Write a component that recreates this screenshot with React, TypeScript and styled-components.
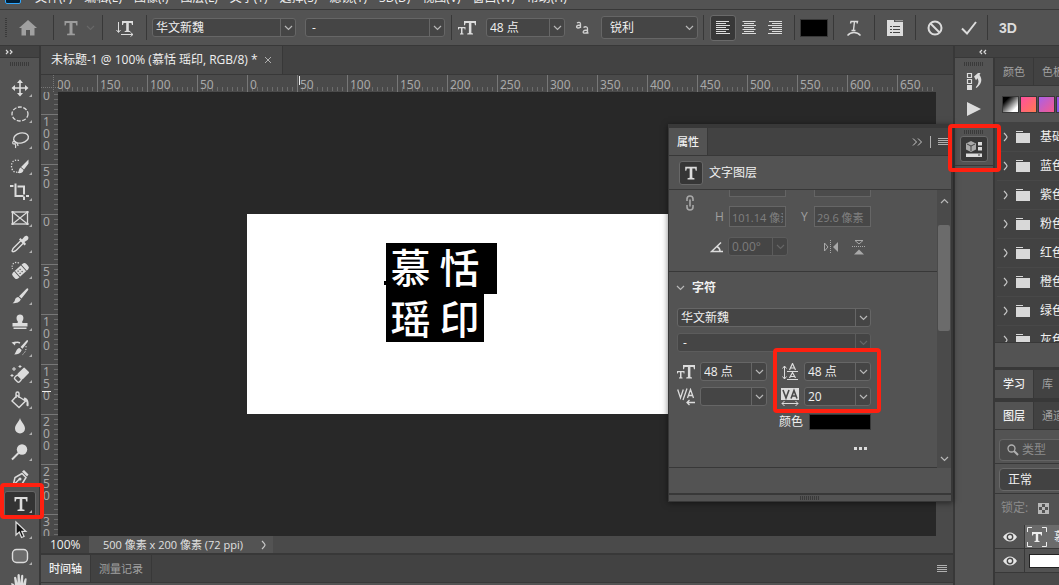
import React from "react";
import styled, { createGlobalStyle } from "styled-components";

const c = {
  panel: "#535353",
  mid: "#4a4a4a",
  dark: "#424242",
  field: "#454545",
  line: "#383838",
  edge: "#666666",
  canvas: "#282828",
  text: "#f0f0f0",
  dim: "#a0a0a0",
  icon: "#dcdcdc",
  red: "#ff2010",
};

const Global = createGlobalStyle`
  * { box-sizing: border-box; }
  body { margin: 0; background: ${c.panel}; color: ${c.text};
    font: 12px/16px "Open Sans", "Noto Sans CJK SC", sans-serif; }
  button, select, input { font: inherit; color: inherit; margin: 0; }
  button { border: 0; background: none; padding: 0; }
  svg { display: block; flex: none; }
`;

/* ---------- shared pieces ---------- */

const Shell = styled.div`
  display: flex;
  flex-direction: column;
  height: 100vh;
  overflow: hidden;
  background: ${c.panel};
`;

const Svg = ({ w = 20, h = w, box, children, color = c.icon }: {
  w?: number; h?: number; box?: string; children: React.ReactNode; color?: string;
}) => (
  <svg width={w} height={h} viewBox={box ?? `0 0 ${w} ${h}`} fill="none" stroke={color} color={color} aria-hidden="true">
    {children}
  </svg>
);

const Chevron = ({ color = "#b8b8b8", up = false }: { color?: string; up?: boolean }) => (
  <Svg w={9} h={6} color={color}><path strokeWidth="1.200" d={up ? "M1 5l3.500-3.500L8 5" : "M1 1l3.500 3.500L8 1"} /></Svg>
);

const ChevronRight = ({ color = "#c8c8c8" }: { color?: string }) => (
  <Svg w={6} h={10} color={color}><path d="M1 1q3 3 3 4t-3 4" strokeWidth="1.2" /></Svg>
);

const MenuLines = () => (
  <Svg w={10} h={8} color="#b0b0b0"><path d="M0 .5h10M0 2.5h10M0 4.5h10M0 6.5h10" /></Svg>
);

const Grip = styled.div<{ $vertical?: boolean }>`
  flex: none;
  width: ${(p) => (p.$vertical ? "2px" : "20px")};
  height: ${(p) => (p.$vertical ? "20px" : "4px")};
  background: repeating-linear-gradient(${(p) => (p.$vertical ? "180deg" : "90deg")}, #3a3a3a 0 1px, transparent 1px 2px);
`;

const Highlight = styled.div<{ $inset: string; $height?: number }>`
  position: absolute;
  inset: ${(p) => p.$inset};
  height: ${(p) => (p.$height ? `${p.$height}px` : "auto")};
  border: 4px solid ${c.red};
  border-radius: 4px;
  z-index: 10;
  pointer-events: none;
`;

const ComboBox = styled.span<{ $width?: number; $tall?: boolean; $off?: boolean }>`
  position: relative;
  display: inline-flex;
  flex: none;
  width: ${(p) => (p.$width ? `${p.$width}px` : "100%")};
  height: ${(p) => (p.$tall ? 23 : 19)}px;
  border: 1px solid ${(p) => (p.$off ? "#5c5c5c" : c.edge)};
  border-radius: 3px;
  background: ${c.field};
`;

const ComboSelect = styled.select<{ $pad: number; $dim?: boolean }>`
  appearance: none;
  width: 100%;
  border: 0;
  background: transparent;
  padding: 0 16px 0 ${(p) => p.$pad}px;
  line-height: 16px;
  outline: none;
  color: ${(p) => (p.$dim ? "#7c7c7c" : c.text)};
  option { color: #111; }
`;

const ComboArrow = styled.span<{ $plain?: boolean; $off?: boolean }>`
  position: absolute;
  inset: 0 0 0 auto;
  width: 15px;
  display: flex;
  align-items: center;
  justify-content: center;
  pointer-events: none;
  border-left: ${(p) => (p.$plain ? "0" : `1px solid ${p.$off ? "#5c5c5c" : c.edge}`)};
`;

const Combo = ({ label, value, width, tall, plain, off, dim, pad = 3 }: {
  label: string; value: string; width?: number; tall?: boolean; plain?: boolean; off?: boolean; dim?: boolean; pad?: number;
}) => (
  <ComboBox $width={width} $tall={tall} $off={off}>
    <ComboSelect aria-label={label} $pad={pad} $dim={dim}><option>{value}</option></ComboSelect>
    <ComboArrow $plain={plain} $off={off}><Chevron color={off ? "#666" : undefined} /></ComboArrow>
  </ComboBox>
);

const Tabs = styled.div<{ $height: number }>`
  display: flex;
  flex: none;
  height: ${(p) => p.$height}px;
  overflow: hidden;
  background: ${c.dark};
  border-bottom: 1px solid ${c.line};
`;

const Tab = styled.button<{ $on?: boolean; $pad?: number }>`
  flex: none;
  display: flex;
  align-items: center;
  gap: 6px;
  padding: 0 ${(p) => p.$pad ?? 8}px;
  white-space: nowrap;
  border-right: 1px solid ${c.line};
  background: ${(p) => (p.$on ? c.panel : "transparent")};
  color: ${(p) => (p.$on ? c.text : c.dim)};
  font-size: 11px;
  font-weight: ${(p) => (p.$on ? 500 : 400)};
`;

const SerifT = ({ size = 18, color = c.icon }: { size?: number; color?: string }) => (
  <Svg w={size} box="0 0 18 18" color={color}>
    <path stroke="none" fill="currentColor" d="M2.5 2h13v4.500h-1.200L13.700 4h-3.200v10.400l2.400.4v1.400H5.100v-1.400l2.400-.4V4H4.300l-.6 2.500H2.500z" />
  </Svg>
);

const SizeIcon = () => (
  <Svg w={18}>
    <g stroke="none" fill="currentColor">
      <path d="M6 2h12v4.200h-1L16.400 4h-3v10l1.600.4v1.100H9.200v-1.100l1.700-.4V4H7.600L7 6.200H6z" />
      <path d="M0 8h7.500v2.600h-.8L6.400 9.200H4.500v5.100l1 .2v1H2v-1l1-.2V9.200H1.200L.8 10.600H0z" />
    </g>
  </Svg>
);

/* ---------- menu and options bars ---------- */

const MenuBar = styled.nav`
  display: flex;
  align-items: flex-end;
  flex: none;
  gap: 12px;
  height: 10px;
  padding-left: 5px;
  overflow: hidden;
  border-bottom: 1px solid ${c.line};
`;

const Logo = styled.div`
  width: 16px;
  height: 14px;
  margin: 0 2px 5px 0;
  border: 1px solid #31a8ff;
  border-radius: 2px;
  background: #001e36;
`;

const MenuItem = styled.a`
  color: inherit;
  text-decoration: none;
  line-height: 16px;
  padding-bottom: 3px;
`;

const OptionsBar = styled.div`
  display: flex;
  align-items: center;
  flex: none;
  height: 36px;
  padding-left: 5px;
  border-bottom: 1px solid ${c.line};
`;

const Group = styled.div<{ $width?: number; $pad?: number; $gap?: number; $center?: boolean }>`
  display: flex;
  flex: none;
  align-items: center;
  justify-content: ${(p) => (p.$center ? "center" : "flex-start")};
  width: ${(p) => (p.$width ? `${p.$width}px` : "auto")};
  padding: 0 ${(p) => p.$pad ?? 0}px;
  gap: ${(p) => p.$gap ?? 0}px;
`;

const Sep = styled.i`
  flex: none;
  width: 1px;
  height: 25px;
  background: ${c.line};
`;

const IconButton = styled.button<{ $on?: boolean; $width?: number }>`
  display: flex;
  align-items: center;
  justify-content: center;
  flex: none;
  width: ${(p) => p.$width ?? 26}px;
  height: 26px;
  border-radius: 3px;
  border: 1px solid ${(p) => (p.$on ? "#6a6a6a" : "transparent")};
  background: ${(p) => (p.$on ? "#383838" : "transparent")};
`;

const Swatch = styled.button<{ $width: number; $height: number; $fill: string }>`
  flex: none;
  width: ${(p) => p.$width}px;
  height: ${(p) => p.$height}px;
  border: 1px solid ${c.line};
  background: ${(p) => p.$fill};
`;

const ThreeD = styled.span`
  font: 700 14px/18px "Liberation Sans", sans-serif;
  color: ${c.icon};
`;

/* ---------- workspace ---------- */

const Workspace = styled.div`
  display: flex;
  flex: 1;
  min-height: 0;
`;

const Toolbar = styled.aside`
  flex: none;
  display: flex;
  flex-direction: column;
  align-items: center;
  width: 41px;
  border-right: 2px solid ${c.line};
`;

const StripHead = styled.div<{ $pad?: number; $center?: boolean }>`
  display: flex;
  flex: none;
  align-items: center;
  justify-content: ${(p) => (p.$center ? "center" : "flex-start")};
  align-self: stretch;
  height: 12px;
  padding: 0 ${(p) => p.$pad ?? 5}px;
  background: ${c.dark};
  border-bottom: 1px solid ${c.line};
`;

const ToolList = styled.div`
  display: flex;
  flex-direction: column;
  align-items: center;
  padding-top: 4px;
`;

const ToolGrip = styled.div`
  height: 13px;
`;

const ToolButton = styled.button<{ $on?: boolean }>`
  position: relative;
  display: flex;
  flex: none;
  align-items: center;
  justify-content: center;
  width: 32px;
  height: 26px;
  border-radius: 3px;
  border: 1px solid ${(p) => (p.$on ? "#666" : "transparent")};
  background: ${(p) => (p.$on ? "#333" : "transparent")};
  &::after {
    content: "";
    position: absolute;
    right: 3px;
    bottom: 3px;
    width: 0;
    height: 0;
    border-left: 3px solid transparent;
    border-bottom: 3px solid #b0b0b0;
  }
`;

const Center = styled.main`
  position: relative;
  display: flex;
  flex-direction: column;
  flex: 1;
  min-width: 0;
`;

const DocTab = styled(Tab)`
  background: ${c.mid};
  font-size: 12px;
  font-weight: 400;
`;

const DocArea = styled.div`
  display: grid;
  grid-template: 17px 1fr / 17px 1fr 17px;
  flex: 1;
  min-height: 0;
  background: ${c.mid};
`;

const Corner = styled.div`
  background:
    repeating-linear-gradient(90deg, #777 0 1px, transparent 1px 2px) 0 12px / 100% 1px no-repeat,
    repeating-linear-gradient(180deg, #777 0 1px, transparent 1px 2px) 12px 0 / 1px 100% no-repeat;
`;

const RulerX = styled.div`
  position: relative;
  display: flex;
  overflow: hidden;
`;

const MarkX = styled.span`
  flex: none;
  width: 50px;
  height: 17px;
  padding-left: 2px;
  border-left: 1px solid #777;
  color: #a8a8a8;
  font: 12px/19px "Noto Sans", sans-serif;
  background: repeating-linear-gradient(90deg, transparent 0 4px, #6c6c6c 4px 5px) 0 12px / 100% 4px no-repeat;
  &:first-child { margin-left: -11px; }
`;

const RulerY = styled.div`
  position: relative;
  overflow: hidden;
`;

const MarkY = styled.span`
  display: flex;
  flex-direction: column;
  height: 50px;
  padding: 1px 0 0 2px;
  border-top: 1px solid #777;
  color: #a8a8a8;
  font: 12px/12px "Noto Sans", sans-serif;
  background: repeating-linear-gradient(180deg, transparent 0 4px, #6c6c6c 4px 5px) 13px 0 / 4px 100% no-repeat;
  &:first-child { margin-top: -28px; }
`;

const Cursor = styled.i<{ $x?: number; $y?: number }>`
  position: absolute;
  left: ${(p) => p.$x ?? 1}px;
  top: ${(p) => p.$y ?? 1}px;
  width: ${(p) => (p.$x === undefined ? "9px" : "1px")};
  height: ${(p) => (p.$x === undefined ? "1px" : "9px")};
  background: #eee;
`;

const Canvas = styled.div`
  position: relative;
  overflow: hidden;
  background: ${c.canvas};
`;

const Artboard = styled.div`
  position: absolute;
  left: 189px;
  top: 122px;
  width: 500px;
  height: 200px;
  background: #fff;
`;

const TypeLayer = styled.div`
  position: absolute;
  left: 139px;
  top: 29px;
  display: flex;
  flex-direction: column;
  align-items: flex-start;
  color: #fff;
  font: 500 40px/47px "STXinwei", "KaiTi", "Noto Sans CJK SC", sans-serif;
  &::before {
    content: "";
    position: absolute;
    left: -2px;
    top: 38px;
    width: 4px;
    height: 4px;
    background: #000;
  }
`;

const TypeLine = styled.span<{ $tail?: boolean }>`
  display: grid;
  grid-template-columns: 49px 49px;
  justify-items: center;
  padding-right: ${(p) => (p.$tail ? 13 : 0)}px;
  height: ${(p) => (p.$tail ? 51 : 48)}px;
  background: #000;
`;

const StatusBar = styled.div`
  display: flex;
  flex: none;
  height: 19px;
  background: ${c.mid};
  border-bottom: 2px solid ${c.line};
`;

const Zoom = styled.input`
  width: 48px;
  border: 0;
  padding: 0 0 0 9px;
  background: ${c.dark};
`;

const DocInfo = styled.div`
  display: flex;
  align-items: center;
  justify-content: space-between;
  width: 184px;
  padding: 0 6px 0 14px;
  background: ${c.panel};
  white-space: nowrap;
  font-size: 11px;
  color: #e0e0e0;
`;

const PanelMenu = styled.button`
  margin: 0 6px 0 auto;
`;

const BottomEdge = styled.div`
  flex: none;
  height: 2px;
`;

/* ---------- floating properties panel ---------- */

const Floating = styled.section`
  position: absolute;
  right: 0;
  top: 78px;
  width: 285px;
  display: flex;
  flex-direction: column;
  border: solid ${c.line};
  border-width: 4px 2px 1px 1px;
  background: ${c.panel};
  box-shadow: 0 1px 6px rgba(0, 0, 0, 0.5);
`;

const TabTools = styled.div`
  display: flex;
  align-items: center;
  gap: 7px;
  margin-left: auto;
  padding-right: 3px;
`;

const Bar = styled.i`
  width: 1px;
  height: 12px;
  background: #b0b0b0;
`;

const Kind = styled.div`
  display: flex;
  align-items: center;
  gap: 6px;
  height: 34px;
  padding-left: 10px;
  border-bottom: 1px solid ${c.line};
`;

const KindIcon = styled.span`
  display: flex;
  align-items: center;
  justify-content: center;
  width: 24px;
  height: 24px;
  border: 1px solid #686868;
  border-radius: 3px;
  background: #363636;
`;

const ScrollRow = styled.div`
  display: flex;
  height: 278px;
`;

const ScrollBody = styled.div`
  flex: 1;
  overflow: hidden;
  border-bottom: 1px solid ${c.line};
`;

const ScrollTrack = styled.div`
  display: flex;
  flex-direction: column;
  align-items: center;
  gap: 21px;
  width: 14px;
  padding: 8px 0 6px;
  background: ${c.mid};
`;

const ScrollThumb = styled.div`
  width: 12px;
  height: 106px;
  border-radius: 2px;
  background: #6b6b6b;
`;

const ScrollEnd = styled.div`
  margin-top: auto;
`;

const Transform = styled.div`
  display: grid;
  grid-template-columns: 30px 14px 57px 15px 13px 57px;
  align-items: center;
  row-gap: 9px;
  height: 82px;
  padding: 0 0 0 16px;
  grid-template-rows: 7px 21px 21px;
  border-bottom: 1px solid ${c.line};
  color: #a0a0a0;
`;

const LinkCell = styled.div`
  grid-row: 1 / 3;
  align-self: start;
  padding-top: 5px;
`;

const CutField = styled.i<{ $col: number }>`
  grid-column: ${(p) => p.$col};
  grid-row: 1;
  height: 7px;
  border: 1px solid #646464;
  border-top: 0;
  background: #4b4b4b;
`;

const FieldLabel = styled.label<{ $col: number }>`
  grid-column: ${(p) => p.$col};
  grid-row: 2;
`;

const Field = styled.input<{ $col: number }>`
  grid-column: ${(p) => p.$col};
  grid-row: 2;
  width: 57px;
  height: 21px;
  padding: 0 2px;
  border: 1px solid #666;
  background: #474747;
  color: #808080;
  font-size: 11px;
`;

const AngleRow = styled.div`
  grid-column: 1 / 7;
  grid-row: 3;
  display: flex;
  align-items: center;
  gap: 4px;
  padding-left: 25px;
`;

const Flips = styled.div`
  display: flex;
  gap: 12px;
  margin-left: 30px;
`;

const CharHead = styled.button`
  display: flex;
  align-items: center;
  gap: 7px;
  height: 36px;
  padding: 0 7px 4px;
  font-weight: 700;
`;

const CharForm = styled.div`
  position: relative;
  display: flex;
  flex-direction: column;
  gap: 6px;
  width: 202px;
  padding: 0 0 0 8px;
`;

const CharRow = styled.div<{ $end?: boolean }>`
  display: flex;
  align-items: center;
  justify-content: ${(p) => (p.$end ? "flex-end" : "space-between")};
  gap: 6px;
  height: 19px;
`;

const Pair = styled.div`
  display: flex;
  align-items: center;
  gap: 5px;
`;

const FontRows = styled.div`
  display: flex;
  flex-direction: column;
  gap: 6px;
  padding-bottom: 4px;
`;

const FloatFoot = styled.div`
  height: 27px;
  border-bottom: 2px solid ${c.line};
`;

const FloatGrip = styled.div`
  display: flex;
  justify-content: center;
  padding: 1px 0;
`;

/* ---------- right side ---------- */

const Right = styled.aside`
  display: flex;
  flex-direction: column;
  flex: none;
  width: 106px;
  border-left: 2px solid ${c.line};
`;

const RightCols = styled.div`
  display: flex;
  flex: 1;
  min-height: 0;
`;

const Dock = styled.div`
  flex: none;
  width: 40px;
  border-right: 2px solid ${c.line};
`;

const DockGroup = styled.div`
  position: relative;
  display: flex;
  flex-direction: column;
  align-items: center;
  gap: 2px;
  padding: 4px 0 3px;
  border-bottom: 1px solid ${c.line};
`;

const Panels = styled.div`
  display: flex;
  flex-direction: column;
  flex: 1;
  min-width: 0;
  overflow: hidden;
  white-space: nowrap;
`;

const Gradients = styled.div`
  display: flex;
  flex: none;
  gap: 1px;
  padding: 10px 0 9px 7px;
`;

const PresetList = styled.ul`
  flex: none;
  height: 221px;
  margin: 0;
  padding: 1px 0 0 2px;
  overflow: hidden;
  list-style: none;
  background: ${c.dark};
  border-bottom: 1px solid ${c.line};
`;

const Preset = styled.li`
  display: flex;
  align-items: center;
  gap: 7px;
  height: 29px;
  padding-left: 6px;
  border-bottom: 1px solid #484848;
  span { padding-left: 3px; }
`;

const PanelGap = styled.div`
  flex: none;
  height: 27px;
  border-bottom: 3px solid ${c.line};
`;

const LearnTabs = styled(Tabs)`
  border-bottom-width: 4px;
`;

const LayerTop = styled.div`
  flex: none;
  padding: 9px 0 2px 4px;
  border-bottom: 1px solid ${c.line};
`;

const Search = styled.label`
  display: flex;
  align-items: center;
  gap: 3px;
  height: 22px;
  padding-left: 7px;
  border: 1px solid #646464;
  border-right: 0;
  border-radius: 4px 0 0 4px;
  background: #4a4a4a;
  input { width: 50px; border: 0; background: none; outline: none; padding: 0; }
  input::placeholder { color: #8c8c8c; opacity: 1; }
`;

const BlendRow = styled.div`
  flex: none;
  padding: 4px 0 2px 4px;
  border-bottom: 1px solid ${c.line};
`;

const Blend = styled.select`
  display: block;
  appearance: none;
  width: 80px;
  height: 23px;
  padding: 0 8px;
  border: 1px solid #686868;
  border-radius: 4px;
  background: ${c.dark};
`;

const LockRow = styled.div`
  display: flex;
  align-items: center;
  flex: none;
  gap: 10px;
  height: 31px;
  padding: 0 0 3px 6px;
  color: #8c8c8c;
`;

const Layer = styled.div<{ $on?: boolean }>`
  display: flex;
  flex: none;
  align-items: center;
  height: 24px;
  background: ${(p) => (p.$on ? `linear-gradient(90deg, ${c.panel} 30px, #6b6b6b 30px)` : c.panel)};
  border-bottom: 1px solid ${c.line};
`;

const EyeButton = styled.button`
  display: flex;
  flex: none;
  align-items: center;
  justify-content: center;
  width: 30px;
  align-self: stretch;
  border-right: 1px solid ${c.line};
`;

const Thumb = styled.div`
  flex: none;
  width: 36px;
  height: 14px;
  margin-left: 4px;
  border: 1px solid #222;
  background: #fff;
`;

const TypeThumb = styled.div`
  flex: none;
  padding-left: 2px;
`;

const LayerName = styled.span`
  padding-left: 7px;
`;

const LayerRest = styled.div`
  flex: 1;
  background: ${c.mid};
`;

/* ---------- tool drawings ---------- */

const fill = { fill: "currentColor", stroke: "none" } as const;

const tools: { name: string; art: React.ReactNode }[] = [
  { name: "移动", art: <><path strokeWidth="1.600" d="M10 3v14M3 10h14" /><path {...fill} d="M10 1.500l3 3.500H7zM10 18.500l3-3.500H7zM1.500 10L5 7v6zM18.500 10L15 7v6z" /></> },
  { name: "椭圆选框", art: <ellipse cx="10" cy="10" rx="8" ry="7" strokeWidth="1.300" strokeDasharray="4 1.500" /> },
  { name: "套索", art: <><ellipse cx="11" cy="8" rx="7.500" ry="5" transform="rotate(-12 11 8)" strokeWidth="1.400" /><path strokeWidth="1.200" d="M4 11c-2 1-1.500 3 0 3s2-2 0-3c2 1 4 2 4 5M5 14c1 1 1 2 .5 4" /></> },
  { name: "快速选择", art: <><path strokeWidth="1.300" strokeDasharray="1.300 1.500" d="M9 4.500C4 3 1.500 6 1.500 10S4 17 7.500 16" /><path {...fill} d="M18.500 3.500v4l-4.500 6-3-2.500zM10.500 11.500l3 2.500c-.5 3-3 3.500-6 3 1.500-1 1-4 3-5.500z" /></> },
  { name: "裁剪", art: <path strokeWidth="2" d="M0 4h3.500M5.500 1.500v12.500h8M7.500 4.500H14v8M14 14.500v3.500M16 14h3" /> },
  { name: "图框", art: <><rect x="2.500" y="4" width="15" height="12" strokeWidth="1.300" /><path d="M2.500 4l15 12M17.500 4l-15 12" strokeWidth="1.200" /><path {...fill} d="M1.500 3h2v2h-2zM16.500 3h2v2h-2zM1.500 15h2v2h-2zM16.500 15h2v2h-2z" /></> },
  { name: "吸管", art: <><path strokeWidth="1.400" d="M11 6.500l-7.500 7.500c-1 1-.8 2-1.500 3 .5 1 1.500.8 2 .5 1-.3 1.500-.5 2.500-1.500L13.500 9" /><path {...fill} d="M9 5.500l1.500-1.500 1.500 1.500 2.500-3c2.500-2 5.500 1 3 3.500l-3 2 1.500 2-1.500 1.500z" /></> },
  { name: "修复画笔", art: <><path strokeDasharray="1.300 1.400" strokeWidth="1.200" d="M9 3C4 1 1 5 2.500 9" /><g transform="rotate(-42 10.500 11)"><rect {...fill} x="1.500" y="7" width="18" height="8" rx="2.500" /><path stroke="#535353" d="M6 7v8M15 7v8" /><path stroke="#535353" strokeWidth="1.200" strokeDasharray="1.200 1.500" d="M8 9.500h5M8 12.500h5" /></g></> },
  { name: "画笔", art: <path {...fill} d="M18 2.500c.5.500.5 1-.2 2l-6.300 8-2.500-2.200 7.500-7.500q1-.8 1.500-.3zM8.300 11l2.500 2.300c-1 3-4 4-8.300 4 1.500-.8 2-1.800 2.500-3.500.5-1.800 1.800-2.800 3.300-2.800z" /> },
  { name: "仿制图章", art: <path {...fill} d="M10 2.500c4 0 4 4.500 2.500 6.500-.7 1-.5 2 .5 2h4.500v3.500h-15V11H7c1 0 1.200-1 .5-2C6 7 6 2.500 10 2.500zM3.500 15.500h13V17h-13z" /> },
  { name: "历史记录画笔", art: <><path {...fill} d="M17.500 2c.8.500.5 1.500 0 2.300l-5 6.500-2-1.700 6-6.500zM9.500 10l2.200 2c-1 3-3.500 4.500-7.500 4.500 2-2 2-6 5.300-6.500zM1.500 4.500l4-1-.5 4z" /><path strokeWidth="1.400" d="M4 5.500c2-1.500 4-1.500 6-.5" /><path strokeDasharray="1.200 1.600" d="M16 8c.5 4-1 7-4 9" /></> },
  { name: "橡皮擦", art: <><g transform="rotate(-45 12 11)"><rect {...fill} x="9" y="7" width="10" height="7.500" rx="1" /><rect x="4" y="7.500" width="5" height="6.500" rx="1.500" strokeWidth="1.400" /></g><path d="M4 3v4M2 5h4M10 1v3M8.500 2.500h3M2 10v3M.5 11.500h3" /></> },
  { name: "油漆桶", art: <><path strokeWidth="1.400" d="M7 5.500l8.500 5.500L9 17.500 2 11zM6 8V3.500c0-2 3-2 3 0V8" /><path {...fill} d="M14 7.500c4.500.5 5 5 4.500 8.500-1.500 1-2.500-.5-2-2 .5-2-.5-3.500-3-4z" /></> },
  { name: "模糊", art: <path {...fill} d="M10 2c1 4 5 6.500 5 10.500a5 5 0 0 1-10 0C5 8.500 9 6 10 2z" /> },
  { name: "减淡", art: <><circle {...fill} cx="12" cy="7.500" r="5.200" /><path strokeWidth="2" d="M8.500 11L2 17.500" /></> },
  { name: "钢笔", art: <><path strokeWidth="1.500" d="M3 18L5 9.500l7-4 4 4-4 6.500zM3.500 17l6-6" /><path {...fill} d="M12 3.500l2-1.500 4.500 4.500-1.500 2z" /><circle {...fill} cx="10" cy="11" r="1.500" /></> },
  { name: "横排文字", art: <path {...fill} d="M4.500 3h13v4.500h-1.300L15.600 5h-3.300v10.300l2.200.4V17H7.500v-1.300l2.200-.4V5H6.400l-.6 2.500H4.500z" /> },
  { name: "路径选择", art: <path fill="#111" strokeWidth="1.300" d="M6 2v13l3.300-3 2.200 5.500 2.500-1-2.200-5.200h4z" /> },
  { name: "圆角矩形", art: <rect x="2.500" y="3.500" width="15" height="13" rx="4" fill="#6c6c6c" strokeWidth="1.400" /> },
  { name: "抓手", art: <path {...fill} d="M5 19.500C4 16 1.500 13.500 1 11.500c1.500-1 3 .5 4 2L4 5.500c.8-1.300 2-.8 2.300.3L7.500 11V3c.5-1.300 2-1.300 2.300 0l.4 8 1-7.500c.6-1.200 2-1 2.100.3l-.3 8 1.800-5c.8-1 2-.5 1.800.8-.6 4-.6 9-2.600 12z" /> },
];

const alignLines = (kind: "left" | "center" | "right") => {
  const widths = [13, 10, 14, 10, 13, 10, 14];
  return widths.map((w, i) => {
    const x = kind === "left" ? 0 : kind === "right" ? 14 - w : (14 - w) / 2;
    return <path key={i} d={`M${x} ${i * 2 + 0.5}h${w}`} />;
  });
};

const Folder = () => (
  <Svg w={14} h={12} color="#d8d8d8"><path {...fill} d="M0 0h7v1H0zM0 2h14v10H0z" /></Svg>
);

const Eye = () => (
  <Svg w={14} h={10} color="#e6e6e6"><path {...fill} d="M0 5c4-6 10-6 14 0-4 6-10 6-14 0z" /><circle cx="7" cy="5" r="2.700" fill="#e6e6e6" stroke="#484848" strokeWidth="1.400" /></Svg>
);

const marksX = [200, 150, 100, 50, 0, 50, 100, 150, 200, 250, 300, 350, 400, 450, 500, 550, 600, 650];
const marksY = ["\u00a0\u00a00", "100", "50", "0", "50", "100", "150", "200", "250", "300"];
const menus = ["文件(F)", "编辑(E)", "图像(I)", "图层(L)", "文字(Y)", "选择(S)", "滤镜(T)", "3D(D)", "视图(V)", "窗口(W)", "帮助(H)"];
const presets = ["基础", "蓝色", "紫色", "粉色", "红色", "橙色", "绿色", "灰色"];
const gradients = [
  "linear-gradient(135deg, #000 20%, #fff 80%)",
  "linear-gradient(135deg, #ff4fa0, #ff7a50)",
  "linear-gradient(135deg, #a860e8, #f85a8c)",
  "linear-gradient(135deg, #a050e0, #6060f0)",
];

export default function App() {
  return (
    <Shell>
      <Global />
      <MenuBar>
        <Logo />
        {menus.map((m) => <MenuItem key={m} href="#">{m}</MenuItem>)}
      </MenuBar>

      <OptionsBar>
        <Grip $vertical />
        <Group $width={46} $pad={12}>
          <button aria-label="主页"><Svg w={18} h={16} color="#a0a0a0"><path {...fill} d="M9 0l9 8h-2.500v7.500H11V10H7v5.500H2.500V8H0z" /></Svg></button>
        </Group>
        <Sep />
        <Group $width={48} $pad={8} $gap={6}><SerifT color="#9c9c9c" /><Chevron color="#686868" /></Group>
        <Sep />
        <Group $width={43} $center>
          <button aria-label="切换文本取向">
            <Svg w={18}><path d="M2.500 3v10M.5 11l2 2.500 2-2.500M5 15.500h12M14.500 13.500l2.500 2-2.500 2" /><path {...fill} d="M6 2h11v4h-1l-.6-2h-2.600v7.800l1.500.3v1H8.700v-1l1.500-.3V4H7.600L7 6H6z" /></Svg>
          </button>
        </Group>
        <Sep />
        <Group $width={304} $pad={5} $gap={9}>
          <Combo label="字体" value="华文新魏" width={144} />
          <Combo label="字体样式" value="-" width={140} pad={6} />
        </Group>
        <Sep />
        <Group $width={251} $pad={6} $gap={10}>
          <SizeIcon />
          <Combo label="字体大小" value="48 点" width={79} />
          <Svg w={16} h={14} color="#d0d0d0"><path strokeWidth="1.300" d="M2 2c1.500-1 3.500-.7 3.500 1V7M5.500 4c-5 0-4.500 3-2.500 3 1.300 0 2.500-1 2.500-2M8.500 6.500c1.800-1.300 4-.8 4 1v4c0 .5.500.500 1 .5M12.500 9c-5.500 0-5 3.200-2.700 3.200 1.700 0 2.700-1 2.700-2" /></Svg>
          <Combo label="消除锯齿" value="锐利" width={97} tall plain pad={8} />
        </Group>
        <Sep />
        <Group $width={90} $pad={6}>
          <IconButton $on aria-label="左对齐"><Svg w={14}>{alignLines("left")}</Svg></IconButton>
          <IconButton aria-label="居中对齐"><Svg w={14}>{alignLines("center")}</Svg></IconButton>
          <IconButton aria-label="右对齐"><Svg w={14}>{alignLines("right")}</Svg></IconButton>
        </Group>
        <Sep />
        <Group $width={38} $pad={5}><Swatch aria-label="文本颜色" $width={28} $height={18} $fill="#000" /></Group>
        <Sep />
        <Group $width={40} $center>
          <IconButton aria-label="变形文字"><Svg w={16}><path strokeWidth="1.400" d="M4.500 3.500L5 1.500h6.500L11 3.500M8.500 1.500L7.500 10M5.500 10.500h4M1.500 15.500c3.500-4 9.500-4 13 0" /></Svg></IconButton>
        </Group>
        <Sep />
        <Group $width={40} $center>
          <IconButton aria-label="字符和段落面板"><Svg w={16}><path {...fill} d="M0 0h7v2h9v14H0z" /><path {...fill} fill="#999" d="M8 0h8v1.300H8.500z" /><path stroke="#454545" d="M3 6.500h2M6 6.500h7M3 9.500h2M6 9.500h7M3 12.500h2M6 12.500h7" /></Svg></IconButton>
        </Group>
        <Sep />
        <Group $width={71} $center>
          <IconButton $width={34} aria-label="取消"><Svg w={16}><circle cx="8" cy="8" r="6.500" strokeWidth="2" /><path strokeWidth="2" d="M3.500 3.500l9 9" /></Svg></IconButton>
          <IconButton $width={34} aria-label="提交"><Svg w={16}><path strokeWidth="2" d="M1 8.500l5 5L15 2" /></Svg></IconButton>
        </Group>
        <Sep />
        <Group $width={40} $center><button><ThreeD>3D</ThreeD></button></Group>
      </OptionsBar>

      <Workspace>
        <Toolbar>
          <StripHead><Svg w={8} h={6}><path d="M1 1l2 2-2 2M5 1l2 2-2 2" strokeWidth="1.200" /></Svg></StripHead>
          <ToolList>
            <ToolGrip><Grip /></ToolGrip>
            {tools.map((t, i) => (
              <ToolButton key={t.name} $on={i === 16} aria-label={t.name}>
                <Svg w={20}>{t.art}</Svg>
                {i === 16 && <Highlight $inset="-9px -9px -3px -5px" />}
              </ToolButton>
            ))}
          </ToolList>
        </Toolbar>

        <Center>
          <Tabs $height={29}>
            <DocTab $on $pad={10}>未标题-1 @ 100% (慕恬 瑶印, RGB/8) *<Svg w={8} color="#b0b0b0"><path d="M1 1l6 6M7 1L1 7" /></Svg></DocTab>
          </Tabs>
          <DocArea>
            <Corner />
            <RulerX>{marksX.map((m, i) => <MarkX key={i}>{m}</MarkX>)}<Cursor $x={241} $y={1} /></RulerX>
            <div />
            <RulerY>
              {marksY.map((m, i) => <MarkY key={i}>{m.split("").map((d, j) => <span key={j}>{d}</span>)}</MarkY>)}
              <Cursor $y={299} />
            </RulerY>
            <Canvas>
              <Artboard>
                <TypeLayer>
                  <TypeLine $tail><span>慕</span><span>恬</span></TypeLine>
                  <TypeLine><span>瑶</span><span>印</span></TypeLine>
                </TypeLayer>
              </Artboard>
            </Canvas>
            <div />
          </DocArea>
          <StatusBar>
            <Zoom aria-label="缩放" defaultValue="100%" />
            <DocInfo>500 像素 x 200 像素 (72 ppi)<ChevronRight /></DocInfo>
          </StatusBar>
          <Tabs $height={28}>
            <Tab $on>时间轴</Tab>
            <Tab>测量记录</Tab>
            <PanelMenu aria-label="面板菜单"><MenuLines /></PanelMenu>
          </Tabs>
          <BottomEdge />

          <Floating>
            <Tabs $height={28}>
              <Tab $on>属性</Tab>
              <TabTools>
                <Svg w={11} h={8} color="#c8c8c8"><path d="M1 .5L4.500 4 1 7.500M6 .5L9.500 4 6 7.500" /></Svg>
                <Bar />
                <button aria-label="属性菜单"><MenuLines /></button>
              </TabTools>
            </Tabs>
            <Kind><KindIcon><SerifT size={16} /></KindIcon>文字图层</Kind>
            <ScrollRow>
              <ScrollBody>
                <Transform>
                  <LinkCell><Svg w={10} h={16} color="#a8a8a8"><path strokeWidth="1.600" d="M2 6V4a3 3 0 0 1 6 0v2M2 10v2a3 3 0 0 0 6 0v-2M5 4.500v7" /></Svg></LinkCell>
                  <CutField $col={3} /><CutField $col={6} />
                  <FieldLabel $col={2} htmlFor="h">H</FieldLabel><Field $col={3} id="h" defaultValue="101.14 像素" />
                  <FieldLabel $col={5} htmlFor="y">Y</FieldLabel><Field $col={6} id="y" defaultValue="29.6 像素" />
                  <AngleRow>
                    <Svg w={14} h={12}><path strokeWidth="1.500" d="M11 1.500L1.500 10.500H13M7 5.500c2 1 3 3 3 5" /></Svg>
                    <Combo label="角度" value="0.00°" width={60} off dim />
                    <Flips>
                      <button aria-label="水平翻转"><Svg w={18} h={14} color="#a8a8a8"><path d="M2.500 3v8l3.500-4z" /><path {...fill} d="M16 2v10l-5-5z" /><path strokeDasharray="1 1" d="M8.500 0v14" /></Svg></button>
                      <button aria-label="垂直翻转"><Svg w={14} h={16} color="#a8a8a8"><path d="M3 1.500h8l-4 3.500z" /><path {...fill} d="M2 15.500h10l-5-5z" /><path strokeDasharray="1 1" d="M0 7.500h14" /></Svg></button>
                    </Flips>
                  </AngleRow>
                </Transform>
                <CharHead><Chevron />字符</CharHead>
                <CharForm>
                  <FontRows>
                    <Combo label="字体系列" value="华文新魏" />
                    <Combo label="字体样式" value="-" off pad={5} />
                  </FontRows>
                  <CharRow>
                    <Pair><SizeIcon /><Combo label="大小" value="48 点" width={67} /></Pair>
                    <Pair><Svg w={18}><path d="M3.500 3v13M1.500 5.500l2-2.500 2 2.500M1.500 13.500l2 2.500 2-2.500M6 8.500h11M6 16.500h11" /><path d="M8.500 7l3-6.500 3 6.500M9.500 5h4M8.500 15l3-5.500 3 5.500M9.500 13.500h4" strokeWidth="1.200" /></Svg><Combo label="行距" value="48 点" width={67} /></Pair>
                  </CharRow>
                  <CharRow>
                    <Pair><Svg w={18}><path strokeWidth="1.300" d="M.7 1.500L3.500 10l2.800-8.500M10 .5L6 12M10.500 10l3-8.500 3 8.500M11.500 7.500h4M10 14.500h8M12.500 12l-2.500 2.500 2.500 2.500" /></Svg><Combo label="字偶间距" value="" width={67} /></Pair>
                    <Pair><Svg w={18}><path {...fill} d="M0 0h18v12H0z" /><path stroke="#484848" strokeWidth="1.600" d="M2 2l3 8 3-8M10 10.500l3-8 3 8M11 8h4" /><path d="M1 15.500h16M3.500 13L1 15.500 3.500 18M14.500 13l2.500 2.500-2.500 2.500" /></Svg><Combo label="字距" value="20" width={67} /></Pair>
                  </CharRow>
                  <CharRow $end>颜色<Swatch aria-label="颜色" $width={62} $height={16} $fill="#000" /></CharRow>
                  <CharRow $end>
                    <button aria-label="更多选项"><Svg w={18} h={20}><path {...fill} d="M1 10h3v3H1zM6 10h3v3H6zM11 10h3v3h-3z" /></Svg></button>
                  </CharRow>
                  <Highlight $inset="40px -10px auto 104px" $height={65} />
                </CharForm>
              </ScrollBody>
              <ScrollTrack>
                <Chevron up />
                <ScrollThumb />
                <ScrollEnd><Chevron /></ScrollEnd>
              </ScrollTrack>
            </ScrollRow>
            <FloatFoot />
            <FloatGrip><Grip /></FloatGrip>
          </Floating>
        </Center>

        <Right>
          <StripHead><Group $width={46} $center><Svg w={8} h={6}><path d="M3 1L1 3l2 2M7 1L5 3l2 2" strokeWidth="1.200" /></Svg></Group></StripHead>
          <RightCols>
            <Dock>
              <DockGroup>
                <Grip />
                <IconButton aria-label="历史记录"><Svg w={16} h={18}><path d="M1.500 1.500h4v4h-4zM1.500 7.500h4v4h-4z" strokeWidth="1.200" /><path {...fill} d="M1 13h5v5H1z" /><path {...fill} d="M8 4.500L12 1h2.500l-1 2c3 4 2.500 9-3 13l-.8-.8c3-3.500 3.500-6 1.800-9l-1.500 2z" /></Svg></IconButton>
                <IconButton aria-label="动作"><Svg w={14}><path {...fill} d="M0 0l14 7-14 7z" /></Svg></IconButton>
              </DockGroup>
              <DockGroup>
                <Grip />
                <IconButton $on $width={28} aria-label="属性面板"><Svg w={16}><path {...fill} fill="#aaa" d="M5 0l5 2.500v6L5 11 0 8.500v-6z" /><path {...fill} d="M12 1h4v3.500h-4zM12 6h4v3.500h-4zM0 12.500h16V16H0z" /><path stroke="#444" d="M1 3l4 2 4-2M5 5v5M12 14h2" /></Svg></IconButton>
                <Highlight $inset="-2px -8px -7px -7px" />
              </DockGroup>
            </Dock>
            <Panels>
              <Tabs $height={28}><Tab>颜色</Tab><Tab>色板</Tab></Tabs>
              <Gradients>{gradients.map((g) => <Swatch key={g} aria-label="渐变" $width={17} $height={17} $fill={g} />)}</Gradients>
              <PresetList>
                {presets.map((p) => <Preset key={p}><ChevronRight /><Folder /><span>{p}</span></Preset>)}
              </PresetList>
              <PanelGap />
              <LearnTabs $height={32}><Tab $on>学习</Tab><Tab>库</Tab></LearnTabs>
              <Tabs $height={28}><Tab $on>图层</Tab><Tab>通道</Tab></Tabs>
              <LayerTop>
                <Search>
                  <Svg w={12} color="#b0b0b0"><circle cx="4.500" cy="4.500" r="3.500" strokeWidth="1.300" /><path strokeWidth="2" d="M7 7l4 4" /></Svg>
                  <input aria-label="筛选图层" placeholder="类型" />
                </Search>
              </LayerTop>
              <BlendRow><Blend aria-label="混合模式"><option>正常</option></Blend></BlendRow>
              <LockRow>锁定:<Svg w={11} color="#b8b8b8"><rect x=".5" y=".5" width="10" height="10" /><path {...fill} d="M1 1h3v3H1zM7 1h3v3H7zM4 4h3v3H4zM1 7h3v3H1zM7 7h3v3H7z" /></Svg></LockRow>
              <Layer $on>
                <EyeButton aria-label="隐藏文字图层"><Eye /></EyeButton>
                <TypeThumb><Svg w={20} color="#eee"><path d="M.5 5V.5H5M15 .5h4.500V5M19.500 15v4.500H15M5 19.500H.5V15" /><path {...fill} d="M5 5h10v3.500h-1L13.500 7h-2.300v6.800l1.300.3v1h-5v-1l1.300-.3V7H6.500L6 8.500H5z" /></Svg></TypeThumb>
                <LayerName>慕恬 瑶印</LayerName>
              </Layer>
              <Layer>
                <EyeButton aria-label="隐藏背景图层"><Eye /></EyeButton>
                <Thumb />
              </Layer>
              <LayerRest />
            </Panels>
          </RightCols>
        </Right>
      </Workspace>
    </Shell>
  );
}
